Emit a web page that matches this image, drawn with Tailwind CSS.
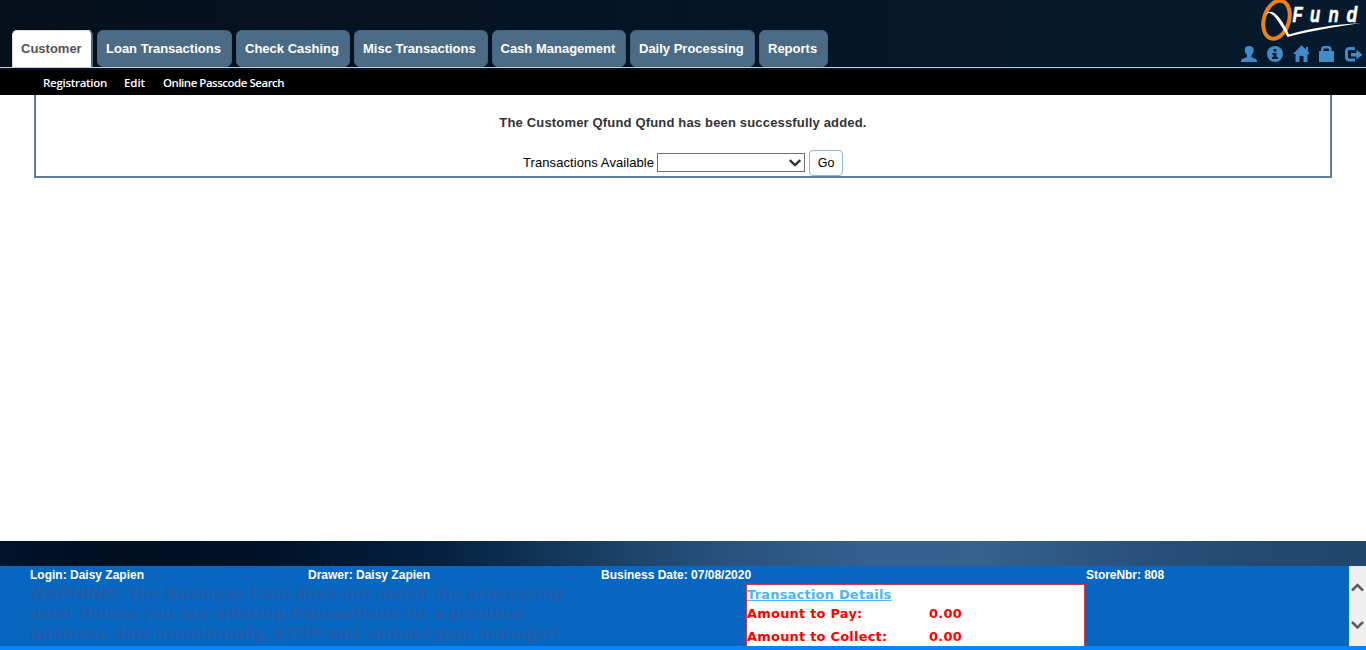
<!DOCTYPE html>
<html lang="en">
<head>
<meta charset="utf-8">
<title>QFund</title>
<script src="https://cdn.jsdelivr.net/npm/@tailwindcss/browser@4"></script>
</head>
<body class="flex h-[650px] w-[1366px] flex-col overflow-hidden bg-white font-['Liberation_Sans',Arial,sans-serif] text-black">
<header class="shrink-0">
  <div class="flex h-[67px] justify-between bg-linear-to-r from-[#06101c] via-[#041426] to-[#051a2c]">
    <nav class="flex gap-1 self-end pl-3 text-[13px] leading-[35px] font-bold whitespace-nowrap text-white">
      <a class="h-[37px] w-[81px] rounded-t-[5px] border border-r-2 border-b-0 border-[#dddddd] border-r-[#4b6a83] bg-white pl-2 text-[#555555]">Customer</a>
      <a class="h-[37px] w-[135px] rounded-md border border-[#46637b] bg-[#4c6b84] pl-2">Loan Transactions</a>
      <a class="h-[37px] w-[114px] rounded-md border border-[#46637b] bg-[#4c6b84] pl-2">Check Cashing</a>
      <a class="h-[37px] w-[134px] rounded-md border border-[#46637b] bg-[#4c6b84] pl-2">Misc Transactions</a>
      <a class="h-[37px] w-[134px] rounded-md border border-[#46637b] bg-[#4c6b84] pl-[7.500px]">Cash Management</a>
      <a class="h-[37px] w-[125px] rounded-md border border-[#46637b] bg-[#4c6b84] pl-2">Daily Processing</a>
      <a class="h-[37px] w-[69px] rounded-md border border-[#46637b] bg-[#4c6b84] pl-2">Reports</a>
    </nav>
    <div class="w-[126px]">
      <svg class="block h-[43px] w-[126px]" viewBox="1240 0 126 43">
        <ellipse cx="1276.500" cy="19.700" rx="12.500" ry="19.500" transform="rotate(17 1276.500 19.700)" fill="none" stroke="#ee7f1a" stroke-width="4"/>
        <path d="M1265.500 14C1270 9.500 1275 12 1279.500 18C1284 24 1286.500 29 1289 34.500C1310 28 1335 24.500 1361 23C1335 27 1310 31 1287.500 37C1284 30 1280.500 24.500 1276.500 19C1272 13 1269 12 1265.500 14Z" fill="#fff"/>
        <g fill="#fff" stroke="#fff" stroke-width=".6" font-family="Liberation Sans" font-weight="700" font-style="italic" font-size="22">
          <text transform="translate(1292.500 21.500) scale(.76 1)">F</text>
          <text transform="translate(1310 21.500) scale(.76 1)">u</text>
          <text transform="translate(1328.500 21.500) scale(.76 1)">n</text>
          <text transform="translate(1346.500 21.500) scale(.8 1)">d</text>
        </g>
      </svg>
      <svg class="block h-6 w-[126px]" viewBox="1240 43 126 24" fill="#428bca">
        <path d="M1249 46C1246 46 1244.800 47.500 1244.800 50C1244.800 52 1245.800 54 1247 55V57C1245 58.200 1241 58.500 1241 61V62H1257V61C1257 58.500 1253 58.200 1251.500 57V55C1252.700 54 1253.700 52 1253.700 50C1253.700 47.500 1252 46 1249 46Z"/>
        <circle cx="1275" cy="54" r="8"/>
        <path d="M1273.500 49H1276.500V51.500H1273.500ZM1272.500 53H1276.500V57H1278V59H1272V57H1273.500V55H1272.500Z" fill="#05182b"/>
        <path d="M1301.500 45.300L1306 49.500V47H1308V51.500L1310 54H1307.500V62H1303.500V56H1299.500V62H1295.500V54H1293Z"/>
        <path d="M1319 51H1321V49Q1321 46 1324 46H1328.500Q1331.500 46 1331.500 49V51H1334V62H1319ZM1323.500 51H1329V49.500Q1329 48.500 1328 48.500H1324.500Q1323.500 48.500 1323.500 49.500Z" fill-rule="evenodd"/>
        <path d="M1355 48.500H1349.500Q1346.500 48.500 1346.500 51.500V57Q1346.500 60 1349.500 60H1355" fill="none" stroke="#428bca" stroke-width="3"/>
        <path d="M1351 53H1356.500V49.500L1362.500 54.700L1356.500 59.500V56.500H1351Z"/>
      </svg>
    </div>
  </div>
  <div class="h-[3px] border-t border-[#c6ced6] bg-[#04111f]"></div>
  <nav class="flex h-[25px] bg-black pl-[43px] font-['Open_Sans',sans-serif] text-[11.500px] leading-[26px] font-semibold whitespace-nowrap text-white">
    <a class="w-[81px] tracking-[-0.28px]">Registration</a>
    <a class="w-[39px] tracking-[-0.1px]">Edit</a>
    <a class="tracking-[-0.48px]">Online Passcode Search</a>
  </nav>
</header>
<main class="h-[446px] shrink-0 px-[34px]">
  <div class="flex h-[83px] flex-col items-center border-2 border-t-0 border-[#5f7f99]">
    <p class="mt-5 text-[13px] leading-4 font-bold tracking-[0.17px] whitespace-nowrap text-[#333333]">The Customer Qfund Qfund has been successfully added.</p>
    <form class="mt-[19px] flex h-[26px] items-center text-[13px] whitespace-nowrap">
      <label class="w-[134px] tracking-[0.08px]">Transactions Available</label>
      <div class="mb-px flex h-[19px] w-[148px] items-center justify-end border border-[#707070] pr-[3px]">
        <svg class="h-[8px] w-[12px]" viewBox="0 0 12 8" fill="none" stroke="#333" stroke-width="2.400"><path d="M.8 1L6 6L11.200 1"/></svg>
      </div>
      <button type="button" class="ml-1 h-[26px] w-[34px] rounded border border-[#8bb8dc] bg-white text-[12.500px]">Go</button>
    </form>
  </div>
</main>
<footer class="flex h-[109px] shrink-0 flex-col">
  <div class="h-[25px] bg-[linear-gradient(90deg,#00132a_0%,#000e20_9%,#001229_20%,#04203f_32%,#153a5f_42%,#28527d_53%,#32608f_63%,#33628f_72%,#29517c_83%,#234a72_91%,#21466c_100%)]"></div>
  <div class="flex h-20 bg-[#0766bf]">
    <div class="flex flex-1 flex-col pl-[30px]">
      <div class="flex h-[18px] text-[12px] leading-[18px] font-bold whitespace-nowrap text-white">
        <span class="w-[278px]">Login: Daisy Zapien</span>
        <span class="w-[293px]">Drawer: Daisy Zapien</span>
        <span class="w-[485px]">Business Date: 07/08/2020</span>
        <span class="tracking-[-0.05px]">StoreNbr: 808</span>
      </div>
      <div class="flex h-[62px]">
        <p class="w-[716px] text-[17px] leading-5 font-bold tracking-[0.59px] whitespace-nowrap text-[#245ba9]">WARNING: The Business Date does not match the processing<br>date! Unless you are entering transactions for a previous<br>business date intentionally, STOP and contact your manager!</p>
        <div class="h-[62px] w-[339px] border border-b-0 border-[#d63a3a] bg-white font-['DejaVu_Sans',Verdana,sans-serif] text-[13px] leading-[20px] font-bold tracking-[0.2px] whitespace-nowrap">
          <a class="block h-[19px] text-[#4db2ff] underline">Transaction Details</a>
          <div class="flex h-[23px] text-[#ff0000]"><span class="w-[182px]">Amount to Pay:</span><span>0.00</span></div>
          <div class="flex h-[19px] text-[#ff0000]"><span class="w-[182px]">Amount to Collect:</span><span>0.00</span></div>
        </div>
      </div>
    </div>
    <div class="flex w-[17px] flex-col items-center bg-[#f0f0f0] pt-4">
      <svg class="h-[10px] w-[13px]" viewBox="0 0 13 10" fill="none" stroke="#606060" stroke-width="2.600"><path d="M1 8.500L6.500 3L12 8.500"/></svg>
      <svg class="mt-[28px] h-[10px] w-[13px]" viewBox="0 0 13 10" fill="none" stroke="#606060" stroke-width="2.600"><path d="M1 2L6.500 7.500L12 2"/></svg>
    </div>
  </div>
  <div class="h-1 bg-[#0685ff]"></div>
</footer>
</body>
</html>
